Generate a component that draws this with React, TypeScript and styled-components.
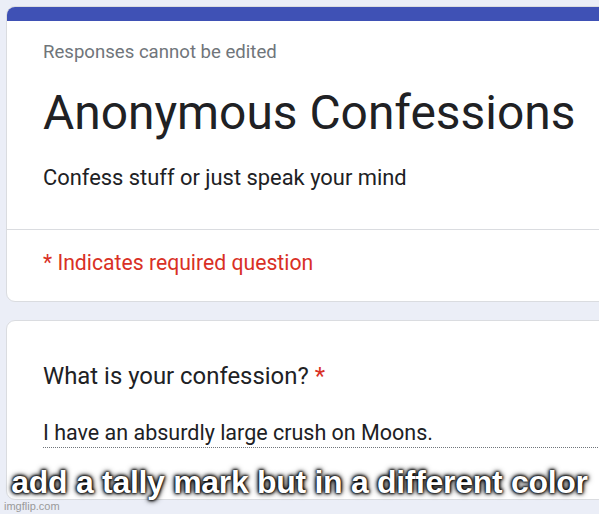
import React from "react";
import styled, { createGlobalStyle } from "styled-components";

const Global = createGlobalStyle`
  html, body { margin: 0; padding: 0; }
  body { background: #ebeef7; font-family: Roboto, "Noto Sans", sans-serif; overflow: hidden; }
`;

const Page = styled.div`
  position: relative;
  width: 599px;
  height: 514px;
  overflow: hidden;
  padding: 6px 0 0 6px;
  box-sizing: border-box;
  display: flex;
  flex-direction: column;
  gap: 18px;
`;

const Card = styled.div`
  background: #fff;
  border: 1px solid #dadce0;
  border-radius: 9px;
  margin-right: -30px;
  overflow: hidden;
  display: flex;
  flex-direction: column;
`;

const TopBar = styled.div`
  height: 14px;
  background: #3f51b5;
`;

const Section = styled.div<{ $pt: number; $pb: number }>`
  padding: ${(p) => p.$pt}px 0 ${(p) => p.$pb}px 36px;
  display: flex;
  flex-direction: column;
`;

const Divider = styled.div`
  height: 1px;
  background: #dadce0;
`;

const Note = styled.div`
  font-size: 18.6px;
  color: #70757a;
  line-height: 24px;
`;

const Title = styled.h1`
  margin: 21px 0 0;
  font-weight: 400;
  font-size: 47.9px;
  line-height: 56px;
  color: #202124;
`;

const Desc = styled.div`
  font-size: 21.9px;
  line-height: 28px;
  color: #202124;
  margin-top: 23px;
`;

const Required = styled.div`
  font-size: 21.2px;
  line-height: 28px;
  color: #d93025;
`;

const Question = styled.div`
  font-size: 23.9px;
  line-height: 30px;
  color: #202124;
  span { color: #d93025; }
`;

const Answer = styled.div`
  margin-top: 29px;
  font-size: 21.5px;
  line-height: 26px;
  color: #202124;
  padding-bottom: 1px;
  border-bottom: 1px dotted #70757a;
`;

const Caption = styled.div`
  position: absolute;
  left: 0;
  right: 0;
  top: 464px;
  text-align: center;
  font-family: "Liberation Sans", Arial, sans-serif;
  font-weight: 700;
  font-size: 32px;
  line-height: 36px;
  color: #fff;
  letter-spacing: -0.3px;
  text-shadow: 0 0 2px #000, 0 0 3px #000, 0 0 4px #000, 0 0 6px #000;
`;

const Watermark = styled.div`
  position: absolute;
  left: 4px;
  bottom: 2px;
  font-family: "Liberation Sans", Arial, sans-serif;
  font-size: 11px;
  color: #9a9a9a;
`;

export default function App() {
  return (
    <>
      <Global />
      <Page>
        <Card>
          <TopBar />
          <Section $pt={19} $pb={37}>
            <Note>Responses cannot be edited</Note>
            <Title>Anonymous Confessions</Title>
            <Desc>Confess stuff or just speak your mind</Desc>
          </Section>
          <Divider />
          <Section $pt={19} $pb={24}>
            <Required>* Indicates required question</Required>
          </Section>
        </Card>
        <Card>
          <Section $pt={40} $pb={51}>
            <Question>
              What is your confession? <span>*</span>
            </Question>
            <Answer>I have an absurdly large crush on Moons.</Answer>
          </Section>
        </Card>
        <Caption>add a tally mark but in a different color</Caption>
        <Watermark>imgflip.com</Watermark>
      </Page>
    </>
  );
}
